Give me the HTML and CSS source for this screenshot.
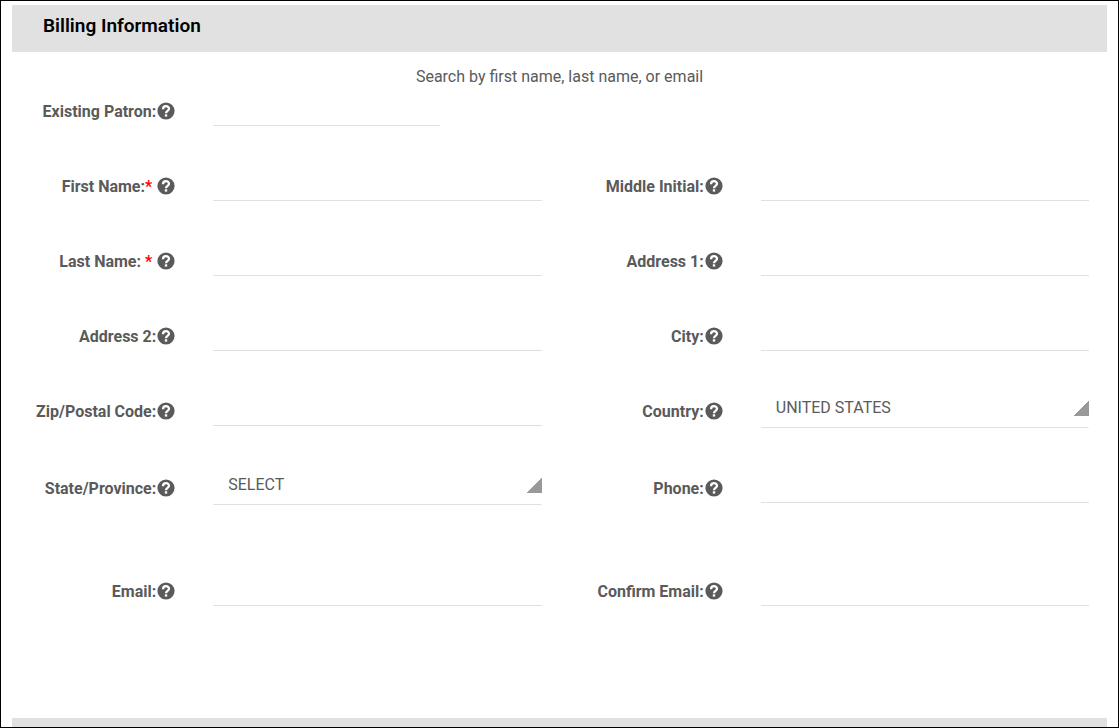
FILE: index.html
```html
<!DOCTYPE html>
<html lang="en">
<head>
    <meta charset="UTF-8">
    <meta name="viewport" content="width=device-width, initial-scale=1.0">
    <title>Billing Information</title>
    <link rel="stylesheet" href="styles.css">
</head>
<body>
    <!-- Help icon shared by all the fields -->
    <svg class="hidden" aria-hidden="true">
        <symbol id="help" viewBox="0 0 20 20">
            <circle cx="10" cy="10" r="8.6"/>
            <path d="M7 8.2C7 4.2 13 4.2 13 7.8C13 9.9 10 9.9 10 12.2" fill="none" stroke="#fff" stroke-width="2.3"/>
            <rect x="8.8" y="13.3" width="2.4" height="2.3" fill="#fff"/>
        </symbol>
    </svg>

    <main class="page">
        <h2 class="section-header">Billing Information</h2>

        <form class="billing-form">
            <p class="hint" id="searchHint">Search by first name, last name, or email</p>

            <div class="row">
                <div class="field">
                    <div class="field-label">
                        <label for="existingPatron">Existing Patron:</label>
                        <button type="button" class="help" aria-label="Help"><svg><use href="#help"/></svg></button>
                    </div>
                    <input type="text" id="existingPatron" class="search" aria-describedby="searchHint">
                </div>
            </div>

            <div class="row">
                <div class="field">
                    <div class="field-label">
                        <label for="firstName">First Name:<span class="required">*</span>&nbsp;</label>
                        <button type="button" class="help" aria-label="Help"><svg><use href="#help"/></svg></button>
                    </div>
                    <input type="text" id="firstName">
                </div>
                <div class="field">
                    <div class="field-label">
                        <label for="middleInitial">Middle Initial:</label>
                        <button type="button" class="help" aria-label="Help"><svg><use href="#help"/></svg></button>
                    </div>
                    <input type="text" id="middleInitial">
                </div>
            </div>

            <div class="row">
                <div class="field">
                    <div class="field-label">
                        <label for="lastName">Last Name: <span class="required">*</span>&nbsp;</label>
                        <button type="button" class="help" aria-label="Help"><svg><use href="#help"/></svg></button>
                    </div>
                    <input type="text" id="lastName">
                </div>
                <div class="field">
                    <div class="field-label">
                        <label for="address1">Address 1:</label>
                        <button type="button" class="help" aria-label="Help"><svg><use href="#help"/></svg></button>
                    </div>
                    <input type="text" id="address1">
                </div>
            </div>

            <div class="row">
                <div class="field">
                    <div class="field-label">
                        <label for="address2">Address 2:</label>
                        <button type="button" class="help" aria-label="Help"><svg><use href="#help"/></svg></button>
                    </div>
                    <input type="text" id="address2">
                </div>
                <div class="field">
                    <div class="field-label">
                        <label for="city">City:</label>
                        <button type="button" class="help" aria-label="Help"><svg><use href="#help"/></svg></button>
                    </div>
                    <input type="text" id="city">
                </div>
            </div>

            <div class="row">
                <div class="field">
                    <div class="field-label">
                        <label for="zip">Zip/Postal Code:</label>
                        <button type="button" class="help" aria-label="Help"><svg><use href="#help"/></svg></button>
                    </div>
                    <input type="text" id="zip">
                </div>
                <div class="field">
                    <div class="field-label">
                        <label for="country">Country:</label>
                        <button type="button" class="help" aria-label="Help"><svg><use href="#help"/></svg></button>
                    </div>
                    <select id="country">
                        <option>UNITED STATES</option>
                    </select>
                </div>
            </div>

            <div class="row row-spaced">
                <div class="field">
                    <div class="field-label">
                        <label for="state">State/Province:</label>
                        <button type="button" class="help" aria-label="Help"><svg><use href="#help"/></svg></button>
                    </div>
                    <select id="state">
                        <option>SELECT</option>
                    </select>
                </div>
                <div class="field">
                    <div class="field-label">
                        <label for="phone">Phone:</label>
                        <button type="button" class="help" aria-label="Help"><svg><use href="#help"/></svg></button>
                    </div>
                    <input type="tel" id="phone">
                </div>
            </div>

            <div class="row">
                <div class="field">
                    <div class="field-label">
                        <label for="email">Email:</label>
                        <button type="button" class="help" aria-label="Help"><svg><use href="#help"/></svg></button>
                    </div>
                    <input type="email" id="email">
                </div>
                <div class="field">
                    <div class="field-label">
                        <label for="confirmEmail">Confirm Email:</label>
                        <button type="button" class="help" aria-label="Help"><svg><use href="#help"/></svg></button>
                    </div>
                    <input type="email" id="confirmEmail">
                </div>
            </div>
        </form>

        <div class="section-footer"></div>
    </main>
</body>
</html>
```
FILE: styles.css
```css
* {
    margin: 0;
    padding: 0;
    box-sizing: border-box;
}

body {
    background-color: #fff;
    color: #5a5a5a;
    font-family: Roboto, sans-serif;
    font-size: 16px;
    line-height: 20px;
}

.hidden {
    display: none;
}

.page {
    display: flex;
    flex-direction: column;
    min-height: 100vh;
    padding: 4px 11px 0;
    border: 1px solid #000;
}

.section-header {
    padding: 11px 31px 16px;
    background-color: #e1e1e1;
    color: #000;
    font-size: 19px;
    font-weight: 600;
}

.billing-form {
    flex: 1;
    padding-top: 15px;
}

.hint {
    height: 14px;
    text-align: center;
}

.row {
    display: grid;
    grid-template-columns: 1fr 1fr;
    margin-bottom: 30px;
}

.row-spaced {
    margin-bottom: 56px;
}

.field {
    display: grid;
    grid-template-columns: 30% 60%;
    column-gap: 37px;
    align-items: start;
}

.field-label {
    display: flex;
    justify-content: flex-end;
    padding-top: 20px;
    font-weight: 700;
    line-height: 22px;
    white-space: nowrap;
}

.required {
    color: #f00;
}

.help {
    width: 20px;
    height: 20px;
    border: none;
    background: none;
    color: #5a5a5a;
    cursor: pointer;
}

.help svg {
    display: block;
    width: 20px;
    height: 20px;
    fill: currentColor;
}

input,
select {
    width: 100%;
    border: none;
    border-bottom: 1px solid #e0e0e0;
    border-radius: 0;
    outline: none;
    background-color: transparent;
    color: #5a5a5a;
    font: inherit;
}

input {
    height: 45px;
}

.search {
    width: 227px;
}

select {
    height: 47px;
    padding: 8px 14px 0;
    border-left: 1px solid transparent;
    border-right: 1px solid transparent;
    appearance: none;
    /* corner triangle */
    background-image: linear-gradient(to bottom right, transparent 50%, #999 50%);
    background-origin: border-box;
    background-position: right 0 bottom 12px;
    background-repeat: no-repeat;
    background-size: 15px 15px;
}

.section-footer {
    height: 9px;
    background-color: #e1e1e1;
}
```
